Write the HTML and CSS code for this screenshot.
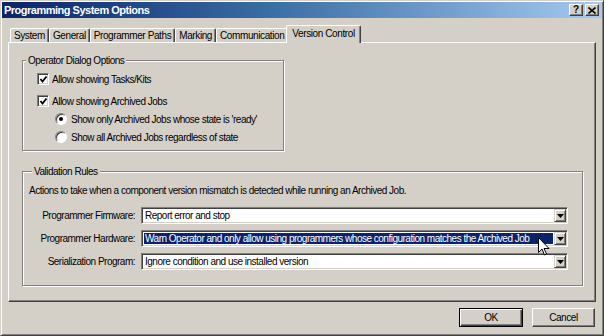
FILE: index.html
```html
<html>
    <head>
        <meta http-equiv="content-type" content="text/html; charset=utf-8" />
        <link rel="stylesheet" href="styles.css">
        <title>Programming System Options</title>
    </head>
    <body>
        <div class="window">
            <div class="titlebar">
                <span class="title">Programming System Options</span>
                <div class="cap-buttons">
                    <span class="cap-btn cap-help">?</span>
                    <span class="cap-btn cap-close">
                        <svg width="8" height="7" viewBox="0 0 8 7"><path d="M0.5 0.5 L7.5 6.5 M7.5 0.5 L0.5 6.5" stroke="#000" stroke-width="1.6"/></svg>
                    </span>
                </div>
            </div>

            <div class="client">
                <div class="tabs">
                    <div class="tab">System</div>
                    <div class="tab">General</div>
                    <div class="tab">Programmer Paths</div>
                    <div class="tab">Marking</div>
                    <div class="tab">Communication</div>
                    <div class="tab tab-active">Version Control</div>
                </div>

                <div class="panel">
                    <fieldset class="group group-operator">
                        <legend>Operator Dialog Options</legend>
                        <div class="options">
                            <div class="opt">
                                <span class="checkbox"><svg width="9" height="9" viewBox="0 0 9 9"><path d="M1.5 4 L3.5 6.5 L7.5 1.5" stroke="#000" stroke-width="1.8" fill="none"/></svg></span>
                                Allow showing Tasks/Kits
                            </div>
                            <div class="opt opt-second">
                                <span class="checkbox"><svg width="9" height="9" viewBox="0 0 9 9"><path d="M1.5 4 L3.5 6.5 L7.5 1.5" stroke="#000" stroke-width="1.8" fill="none"/></svg></span>
                                Allow showing Archived Jobs
                            </div>
                            <div class="opt opt-sub">
                                <span class="radio radio-on"></span>
                                Show only Archived Jobs whose state is 'ready'
                            </div>
                            <div class="opt opt-sub">
                                <span class="radio"></span>
                                Show all Archived Jobs regardless of state
                            </div>
                        </div>
                    </fieldset>

                    <fieldset class="group group-rules">
                        <legend>Validation Rules</legend>
                        <p class="note">Actions to take when a component version mismatch is detected while running an Archived Job.</p>
                        <div class="rules">
                            <span class="rule-label">Programmer Firmware:</span>
                            <div class="combo">
                                <span class="combo-text">Report error and stop</span>
                                <span class="combo-btn"><svg width="7" height="4" viewBox="0 0 7 4"><path d="M0 0 H7 L3.5 4 Z" fill="#000"/></svg></span>
                            </div>

                            <span class="rule-label">Programmer Hardware:</span>
                            <div class="combo">
                                <span class="combo-text"><span class="combo-selected">Warn Operator and only allow using programmers whose configuration matches the Archived Job</span></span>
                                <span class="combo-btn"><svg width="7" height="4" viewBox="0 0 7 4"><path d="M0 0 H7 L3.5 4 Z" fill="#000"/></svg></span>
                            </div>

                            <span class="rule-label">Serialization Program:</span>
                            <div class="combo">
                                <span class="combo-text">Ignore condition and use installed version</span>
                                <span class="combo-btn"><svg width="7" height="4" viewBox="0 0 7 4"><path d="M0 0 H7 L3.5 4 Z" fill="#000"/></svg></span>
                            </div>
                        </div>
                    </fieldset>
                </div>

                <div class="actions">
                    <button class="btn btn-default">OK</button>
                    <button class="btn btn-cancel">Cancel</button>
                </div>
            </div>

            <!-- mouse pointer resting over the hardware combo -->
            <svg class="cursor" width="12" height="19" viewBox="0 0 12 19">
                <path d="M0.5 0.5 V15.5 L4 12 L6.5 18 L8.5 17 L6 11.5 H11 Z" fill="#fff" stroke="#000" stroke-width="1"/>
            </svg>
        </div>
    </body>
</html>
```

FILE: styles.css
```css
/*
classic grey dialog, 3d borders done with border + inset box-shadow
font is squeezed a bit to get the narrow tahoma-ish widths
*/
* {
    box-sizing: border-box;
}
body {
    margin: 0;
    background: #d4d0c8;
    font-family: "Liberation Sans", Arial, sans-serif;
    font-size: 10px;
    letter-spacing: -0.5px;
    color: #000;
}
.window {
    position: relative;
    width: 604px;
    height: 336px;
    padding: 1px;
    border: 1px solid;
    border-color: #d4d0c8 #404040 #404040 #d4d0c8;
    box-shadow: inset 1px 1px #fff, inset -1px -1px #808080;
    display: flex;
    flex-direction: column;
}
.titlebar {
    height: 16px;
    padding: 0 3px 0 2px;
    background: linear-gradient(to right, #0a246a, #3a6ea5 45%, #a6caf0);
    color: #fff;
    font-size: 11px;
    font-weight: bold;
    letter-spacing: -0.5px;
    display: flex;
    align-items: center;
    justify-content: space-between;
}
.cap-buttons {
    display: flex;
    gap: 1px;
}
.cap-btn {
    width: 14px;
    height: 12px;
    background: #d4d0c8;
    border: 1px solid;
    border-color: #fff #404040 #404040 #fff;
    box-shadow: inset -1px -1px #808080;
    color: #000;
    font-size: 10px;
    line-height: 10px;
    letter-spacing: 0;
    display: flex;
    align-items: center;
    justify-content: center;
}
.cap-close {
    margin-left: 1px;
}
.client {
    flex: 1;
    padding: 7px 6px 0 6px;
    display: flex;
    flex-direction: column;
}
.tabs {
    height: 17px;
    padding-left: 2px;
    display: flex;
    align-items: flex-end;
    position: relative;
    z-index: 1;
}
.tab {
    height: 14px;
    padding: 0 3px;
    line-height: 13px;
    letter-spacing: -0.4px;
    border-top: 1px solid #fff;
    border-left: 1px solid #fff;
    border-right: 1px solid #404040;
    box-shadow: inset -1px 0 #808080;
    border-radius: 2px 2px 0 0;
    background: #d4d0c8;
    white-space: nowrap;
}
.tab-active {
    height: 18px;
    margin: 0 -2px -1px -2px;
    padding: 1px 5px 0 5px;
}
.panel {
    padding: 11px 12px 15px 13px;
    border: 1px solid;
    border-color: #fff #404040 #404040 #fff;
    box-shadow: inset -1px -1px #808080;
}
.group {
    margin: 0;
    padding: 0;
    min-width: 0;
    border: 1px solid #808080;
    box-shadow: inset 1px 1px #fff, 1px 1px #fff;
}
.group legend {
    margin-left: 3px;
    padding: 0 2px;
    line-height: 13px;
    background: #d4d0c8;
}
.group-operator {
    width: 262px;
}
.options {
    padding: 4px 0 5px 14px;
}
.opt {
    height: 16px;
    display: flex;
    align-items: center;
    gap: 3px;
    white-space: nowrap;
}
.opt-second {
    margin-top: 6px;
}
.opt-sub {
    margin-top: 2px;
    padding-left: 18px;
    gap: 4px;
}
.checkbox {
    width: 12px;
    height: 12px;
    background: #fff;
    border: 1px solid;
    border-color: #808080 #fff #fff #808080;
    box-shadow: inset 1px 1px #404040, inset -1px -1px #d4d0c8;
    display: flex;
    align-items: center;
    justify-content: center;
}
.radio {
    width: 12px;
    height: 12px;
    border-radius: 50%;
    background: #fff;
    border: 1px solid;
    border-color: #808080 #fff #fff #808080;
    box-shadow: inset 1px 1px #404040;
    display: flex;
    align-items: center;
    justify-content: center;
}
.radio-on:after {
    content: "";
    width: 4px;
    height: 4px;
    border-radius: 50%;
    background: #000;
}
.group-rules {
    margin-top: 14px;
    padding: 0 14px 15px 6px;
}
.note {
    margin: 7px 0 0 0;
    line-height: 12px;
    white-space: nowrap;
}
.rules {
    margin-top: 10px;
    display: grid;
    grid-template-columns: 106px minmax(0, 1fr);
    column-gap: 6px;
    row-gap: 6px;
    align-items: center;
}
.rule-label {
    text-align: right;
    white-space: nowrap;
}
.combo {
    height: 17px;
    min-width: 0;
    padding: 2px;
    background: #fff;
    border: 1px solid;
    border-color: #808080 #fff #fff #808080;
    box-shadow: inset 1px 1px #404040, inset -1px -1px #d4d0c8;
    display: flex;
    align-items: stretch;
}
.combo-text {
    flex: 1;
    min-width: 0;
    line-height: 11px;
    white-space: nowrap;
    overflow: hidden;
    padding-left: 1px;
}
.combo-text:has(.combo-selected) {
    padding-left: 0;
    margin-right: 1px;
    background: #0a246a;
}
.combo-selected {
    padding-left: 1px;
    color: #fff;
}
.combo-btn {
    flex: none;
    width: 12px;
    margin: -1px -1px -1px 0;
    background: #d4d0c8;
    border: 1px solid;
    border-color: #d4d0c8 #404040 #404040 #d4d0c8;
    box-shadow: inset 1px 1px #fff, inset -1px -1px #808080;
    display: flex;
    align-items: center;
    justify-content: center;
}
.actions {
    margin-top: 6px;
    padding-right: 1px;
    display: flex;
    justify-content: flex-end;
    gap: 9px;
}
.btn {
    width: 63px;
    height: 19px;
    padding: 0;
    font-family: "Liberation Sans", Arial, sans-serif;
    font-size: 10px;
    letter-spacing: -0.4px;
    color: #000;
    background: #d4d0c8;
    border: 1px solid;
    border-color: #fff #404040 #404040 #fff;
    box-shadow: inset -1px -1px #808080;
}
.btn-default {
    width: 64px;
    border: 1px solid #000;
    box-shadow: inset 1px 1px #fff, inset -1px -1px #404040, inset -2px -2px #808080;
}
.cursor {
    position: absolute;
    left: 537px;
    top: 236px;
}
```
